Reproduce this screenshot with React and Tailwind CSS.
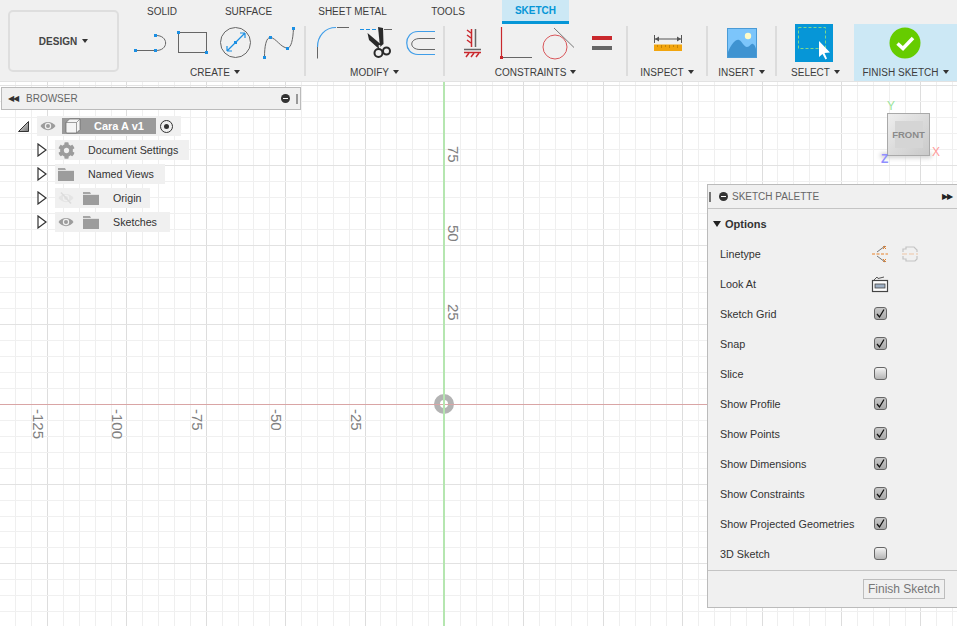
import { FaCog } from 'react-icons/fa'

const FONT = 'font-["Liberation_Sans",Arial,sans-serif]'

function Caret({ className = '' }) {
  return <span className={`inline-block w-0 h-0 border-x-[3.5px] border-x-transparent border-t-[4px] border-t-[#333] ${className}`} />
}

function Handle({ x, y, s = 3 }) {
  return <rect x={x - s / 2} y={y - s / 2} width={s} height={s} fill="#1b8fe3" shapeRendering="crispEdges" />
}

function CreateIcons() {
  return (
    <svg viewBox="126 24 178 38" className="w-[178px] h-[38px]" fill="none">
      <path d="M135 50.5H155M155.5 35.5C169 35 169 51 155.5 50.5" stroke="#666" strokeWidth="1" />
      <Handle x={135.5} y={50.5} /><Handle x={155.5} y={50.5} /><Handle x={155.5} y={35.5} />
      <rect x="178.5" y="32.5" width="28" height="20" stroke="#666" strokeWidth="1" />
      <Handle x={178.5} y={32.5} /><Handle x={206.5} y={52.5} />
      <circle cx="235.5" cy="42.5" r="15" stroke="#666" strokeWidth="1" />
      <path d="M227 51L245 33M245 33h-5M245 33v5M227 51h5M227 51v-5" stroke="#1b8fe3" strokeWidth="1.2" />
      <Handle x={235.5} y={42.5} />
      <path d="M264.5 57C264.5 47 266 37 270.5 37.5C276 38 281 48 287.5 48C291 48 293 40 293.5 28" stroke="#666" strokeWidth="1" />
      <Handle x={264.5} y={57.5} /><Handle x={270.5} y={37.5} /><Handle x={287.5} y={48.5} /><Handle x={293.5} y={28.5} />
    </svg>
  )
}

function ModifyIcons() {
  return (
    <svg viewBox="306 24 137 38" className="w-[137px] h-[38px]" fill="none">
      <path d="M317.5 47V58.5M337 27.5H349" stroke="#666" strokeWidth="1" />
      <path d="M317.5 47C317.5 36 325 27.5 336 27.5" stroke="#3f9de8" strokeWidth="1.2" />
      <path d="M360 29.5H377" stroke="#1b8fe3" strokeWidth="1" strokeDasharray="4 2" />
      <path d="M384 29.5H392" stroke="#666" strokeWidth="1" />
      <path d="M378 27L383 28L383.5 44L380 47Z" fill="#2a2a2a" />
      <path d="M367.5 33L380.5 44L378.5 48.5L369 40Z" fill="#2a2a2a" />
      <circle cx="379.5" cy="46" r="1" fill="#eee" />
      <circle cx="378.5" cy="53" r="4" stroke="#2a2a2a" strokeWidth="2" />
      <circle cx="386.5" cy="51" r="3.5" stroke="#2a2a2a" strokeWidth="2" />
      <path d="M435 31.5H418C403 31.5 403 54.5 418 54.5H435" stroke="#3f9de8" strokeWidth="1.2" />
      <path d="M435 38.5H420C409 38.5 409 49.5 420 49.5H435" stroke="#666" strokeWidth="1" />
    </svg>
  )
}

function ConstraintIcons() {
  return (
    <svg viewBox="445 24 181 38" className="w-[181px] h-[38px]" fill="none">
      <path d="M471.5 29V47" stroke="#c9282d" strokeWidth="1.5" />
      <path d="M475.5 29V47" stroke="#666" strokeWidth="1.5" />
      <path d="M467 30l4 3M467 35l4 3M467 40l4 3" stroke="#c9282d" strokeWidth="1.5" />
      <path d="M464 49.5H481" stroke="#666" strokeWidth="1.5" />
      <path d="M464 52.5H481" stroke="#c9282d" strokeWidth="1.5" />
      <path d="M466 57l3-4M471 57l3-4M476 57l3-4" stroke="#c9282d" strokeWidth="1.5" />
      <path d="M501.5 27V57" stroke="#c9282d" strokeWidth="1.2" />
      <path d="M503 57.5H532" stroke="#666" strokeWidth="1" />
      <rect x="500" y="56" width="3" height="3" fill="#c9282d" />
      <circle cx="555" cy="47" r="12" stroke="#d9565a" strokeWidth="1" />
      <path d="M554 28L574 47.5" stroke="#777" strokeWidth="1" />
      <rect x="592" y="36" width="20" height="4" fill="#c9282d" />
      <rect x="592" y="46" width="20" height="4" fill="#666" />
    </svg>
  )
}

function InspectIcon() {
  return (
    <svg viewBox="650 34 36 18" className="w-[36px] h-[18px] ml-[1px]" fill="none">
      <path d="M654.5 35V43M681.5 35V43M655 39H681" stroke="#555" strokeWidth="1" />
      <path d="M655 39l4-2.5v5ZM681 39l-4-2.5v5Z" fill="#555" />
      <rect x="654" y="44.5" width="28" height="6.5" fill="#f2a50e" />
      <path d="M657.5 45V47M661.5 45V48M665.5 45V47M669.5 45V48M673.5 45V47M677.5 45V48" stroke="#b97a05" strokeWidth="0.8" />
    </svg>
  )
}

function InsertIcon() {
  return (
    <svg viewBox="0 0 30 30" className="w-[30px] h-[30px]">
      <rect x="0.5" y="0.5" width="29" height="29" fill="#7cc5fb" stroke="#4a9bd6" />
      <circle cx="21" cy="8" r="3.2" fill="#fdfbc8" />
      <path d="M1 24C5 15 9 11 12 12C15 13 17 19 20 19C23 19 24 15 26 16C28 17 29 20 29 22V29H1Z" fill="#3f93d1" />
    </svg>
  )
}

function SelectIcon() {
  return (
    <svg viewBox="0 0 38 38" className="w-[38px] h-[38px] -ml-[3px]">
      <rect width="38" height="38" fill="#0696d7" />
      <rect x="3.5" y="3.5" width="27" height="21" fill="none" stroke="#7fd98a" strokeDasharray="3 2" />
      <path d="M24 17L24 33L27.5 30L30.5 35.5L32 34.5L29.5 29L35 28.5Z" fill="#fff" />
    </svg>
  )
}

function FinishIcon() {
  return (
    <svg viewBox="0 0 32 32" className="w-[32px] h-[32px] mb-[1px] mr-[2px]">
      <circle cx="16" cy="16" r="15.5" fill="#66cc00" />
      <path d="M8.5 16.5L14 21.5L24 11" fill="none" stroke="#fff" strokeWidth="3.5" />
    </svg>
  )
}

function Separator() {
  return <div className="w-[2px] h-[50px] mt-[2px] bg-[#dcdcdc] shrink-0" />
}

function Group({ label, width, children, active = false }) {
  return (
    <div className={`flex flex-col items-center shrink-0 ${active ? 'bg-[#cce8f5]' : ''}`} style={{ width }}>
      <div className="h-[38px] flex items-center justify-center">{children}</div>
      <div className="h-[18px] mt-[1px] flex items-center gap-[4px] text-[10px] text-[#3c3c3c] whitespace-nowrap">
        {label}
        <Caret />
      </div>
    </div>
  )
}

function Toolbar() {
  const tabs = [['SOLID', 'w-[58px]'], ['SURFACE', 'w-[115px]'], ['SHEET METAL', 'w-[93px]'], ['TOOLS', 'w-[98px]']]
  return (
    <div className="flex h-[82px] shrink-0 bg-[#f0f0f0] border-b border-[#e2e2e2]">
      <div className="w-[126px] shrink-0 pl-[8px] pt-[10px]">
        <div className="w-[111px] h-[62px] rounded-[5px] border-2 border-[#dedede] flex items-center justify-center gap-[5px] text-[10px] font-bold text-[#444]">
          DESIGN <Caret />
        </div>
      </div>
      <div className="flex-1 flex flex-col min-w-0">
        <div className="h-[24px] flex text-[10px] text-[#3c3c3c] pl-[7px]">
          {tabs.map(([t, w]) => (
            <div key={t} className={`${w} flex items-center justify-center h-[22px]`}>{t}</div>
          ))}
          <div className="w-[67px] h-[24px] ml-[5px] bg-[#cce8f5] border-b-[3px] border-[#0696d7] flex items-center justify-center font-bold text-[#0696d7]">SKETCH</div>
        </div>
        <div className="flex flex-1">
          <Group label="CREATE" width={178}><CreateIcons /></Group>
          <Separator />
          <Group label="MODIFY" width={137}><ModifyIcons /></Group>
          <Separator />
          <Group label="CONSTRAINTS" width={181}><ConstraintIcons /></Group>
          <Separator />
          <Group label="INSPECT" width={78}><InspectIcon /></Group>
          <Separator />
          <Group label="INSERT" width={67}><InsertIcon /></Group>
          <Separator />
          <Group label="SELECT" width={77}><SelectIcon /></Group>
          <Group label="FINISH SKETCH" width={103} active><FinishIcon /></Group>
        </div>
      </div>
    </div>
  )
}

// sketch grid, axes at the origin of the canvas
function SketchGrid() {
  const ox = 444
  const oy = 322
  const xs = []
  const ys = []
  for (let i = -28; i <= 33; i++) xs.push(i)
  for (let i = -14; i <= 20; i++) ys.push(i)
  return (
    <svg className="absolute inset-0 w-full h-full" shapeRendering="crispEdges">
      {xs.map((i) => {
        const x = Math.round(ox + i * 15.88) + 0.5
        return <line key={i} x1={x} x2={x} y1="0" y2="544" stroke={i % 5 === 0 ? '#dddddd' : '#efefef'} />
      })}
      {ys.map((i) => {
        const y = Math.round(oy - i * 15.93) + 0.5
        return <line key={i} x1="0" x2="957" y1={y} y2={y} stroke={i % 5 === 0 ? '#e2e2e2' : '#f0f0f0'} />
      })}
      <circle cx={ox} cy={oy} r="7" fill="none" stroke="#b3b3b3" strokeWidth="6" shapeRendering="auto" />
      <line x1="0" x2="957" y1={oy + 0.5} y2={oy + 0.5} stroke="#d9a5a5" />
      <line x1={ox} x2={ox} y1="0" y2="544" stroke="#b5e6b0" strokeWidth="2" />
    </svg>
  )
}

function RulerLabel({ text, className }) {
  return <span className={`absolute [writing-mode:vertical-rl] text-[15px] leading-none text-[#808080] ${className}`}>{text}</span>
}

function Eye({ off = false, className = '' }) {
  return (
    <svg viewBox="0 0 16 12" className={`w-[16px] h-[12px] ${className}`}>
      <path d="M0.5 6C4 0.5 12 0.5 15.5 6C12 11.5 4 11.5 0.5 6Z" fill={off ? '#e4e4e4' : '#9c9c9c'} />
      <circle cx="8" cy="6" r="3.2" fill="#f0f0f0" />
      <circle cx="8" cy="6" r="2" fill={off ? '#e4e4e4' : '#9c9c9c'} />
      {off && <path d="M3 0.5L13 11.5" stroke="#dcdcdc" strokeWidth="1.5" />}
    </svg>
  )
}

function Folder() {
  return (
    <svg viewBox="0 0 16 13" className="w-[16px] h-[13px]">
      <path d="M0 0H7L8 2H16V4H0Z" fill="#a6a6a6" />
      <rect y="3" width="16" height="10" fill="#9c9c9c" />
      <path d="M0 2.5H16" stroke="#f0f0f0" strokeWidth="0.8" />
    </svg>
  )
}

function Arrow() {
  return (
    <svg viewBox="0 0 10 14" className="w-[10px] h-[14px] shrink-0">
      <path d="M1 1L9 7L1 13Z" fill="#fff" stroke="#333" strokeWidth="1.2" />
    </svg>
  )
}

function Row({ width, children }) {
  return (
    <div className="flex items-center h-[24px] pl-[37px]">
      <Arrow />
      <div className="h-[20px] ml-[8px] bg-[#f0f0f0] flex items-center text-[10.7px] text-[#333] whitespace-nowrap" style={{ width }}>
        {children}
      </div>
    </div>
  )
}

function BrowserPanel() {
  return (
    <div className="absolute left-0 top-0 w-[301px]">
      <div className="ml-[1px] mt-[5px] h-[23px] bg-[#f0f0f0] border border-[#bbbbbb] flex items-center pl-[6px] pr-[2px] text-[10px] text-[#666]">
        <span className="text-[8px] text-[#333] w-[18px] tracking-[-1px]">◀◀</span>
        <span className="flex-1">BROWSER</span>
        <span className="w-[9px] h-[9px] rounded-full bg-[#333] flex items-center justify-center mr-[6px]">
          <span className="w-[5px] h-[1px] bg-white" />
        </span>
        <span className="w-[2px] h-[10px] border-x border-[#999]" />
      </div>
      <div className="mt-[4px] h-[24px] flex items-center pl-[18px]">
        <svg viewBox="0 0 11 11" className="w-[11px] h-[11px]">
          <defs>
            <linearGradient id="tri" x1="0" y1="0" x2="1" y2="1">
              <stop offset="0" stopColor="#eee" /><stop offset="1" stopColor="#777" />
            </linearGradient>
          </defs>
          <path d="M0.5 10.5L10.5 0.5V10.5Z" fill="url(#tri)" stroke="#333" />
        </svg>
        <div className="ml-[8px] w-[144px] h-[20px] bg-[#f0f0f0] flex items-center pl-[3px]">
          <Eye />
          <div className="ml-[6px] w-[94px] h-[16px] bg-[#9a9a9a] flex items-center text-[11px] font-bold text-white">
            <svg viewBox="0 0 16 16" className="w-[16px] h-[16px] ml-[3px]">
              <path d="M1 4.5L4.5 1H15V11.5L11.5 15H2A1 1 0 0 1 1 14Z" fill="#f4f4f4" stroke="#666" strokeWidth="0.7" />
              <path d="M1 4.5H11.5V15M11.5 4.5L15 1" fill="none" stroke="#777" strokeWidth="0.7" />
            </svg>
            <span className="ml-[13px]">Cara A v1</span>
          </div>
          <span className="ml-[4px] w-[13px] h-[13px] rounded-full border border-[#333] flex items-center justify-center">
            <span className="w-[5px] h-[5px] rounded-full bg-[#333]" />
          </span>
        </div>
      </div>
      <Row width={134}>
        <FaCog className="w-[17px] h-[17px] ml-[3px] text-[#9c9c9c]" />
        <span className="ml-[13px]">Document Settings</span>
      </Row>
      <Row width={110}>
        <span className="ml-[3px]"><Folder /></span>
        <span className="ml-[14px]">Named Views</span>
      </Row>
      <Row width={95}>
        <Eye off className="ml-[3px]" />
        <span className="ml-[9px]"><Folder /></span>
        <span className="ml-[14px]">Origin</span>
      </Row>
      <Row width={115}>
        <Eye className="ml-[3px]" />
        <span className="ml-[9px]"><Folder /></span>
        <span className="ml-[14px]">Sketches</span>
      </Row>
    </div>
  )
}

function ViewCube() {
  return (
    <div className="absolute left-[882px] top-[18px] w-[60px] h-[66px] text-[12px] leading-[14px]">
      <span className="absolute left-[5px] -top-[1px] text-[#9be59b]">Y</span>
      <div className="absolute left-[-2px] top-[53px] w-[52px] h-[5px] rounded-full bg-[#d0d0d0] blur-[2px]" />
      <div className="absolute left-[5px] top-[13px] w-[43px] h-[43px] border border-[#a9a9a9] bg-gradient-to-br from-[#eeeeee] to-[#c9c9c9] flex items-center justify-center">
        <div className="w-[28px] h-[27px] bg-[#d5d5d5] flex items-center justify-center font-bold text-[9.5px] text-[#8a8a8a]">FRONT</div>
      </div>
      <span className="absolute left-[50px] top-[45px] text-[#ff9a9a]">X</span>
      <span className="absolute -left-[1px] top-[52px] text-[#8f8fff] font-bold">Z</span>
    </div>
  )
}

function Checkbox({ checked }) {
  return (
    <span className={`-mt-[1px] w-[13px] h-[13px] rounded-[3px] border border-[#666] flex items-center justify-center bg-gradient-to-b ${checked ? 'from-[#c9c9c9] to-[#a8a8a8]' : 'from-[#f2f2f2] to-[#b5b5b5]'}`}>
      {checked && (
        <svg viewBox="0 0 11 11" className="w-[11px] h-[11px]">
          <path d="M2 6L4.5 9L9 1.5" fill="none" stroke="#111" strokeWidth="1.3" />
        </svg>
      )}
    </span>
  )
}

function LinetypeIcons() {
  return (
    <div className="flex gap-[12px] -ml-[3px]">
      <svg viewBox="0 0 18 18" className="w-[18px] h-[18px]" fill="none">
        <path d="M1 9H17" stroke="#e8822b" strokeWidth="1.2" strokeDasharray="3 1.5" />
        <path d="M14 1L6 7M14 17L6 11" stroke="#777" strokeWidth="1" />
        <path d="M12 1l3 3M15 1l-3 3M12 14l3 3M15 14l-3 3" stroke="#e8822b" strokeWidth="1" />
      </svg>
      <svg viewBox="0 0 18 18" className="w-[18px] h-[18px]" fill="none">
        <path d="M2 7V4H5V2H13L16 5V7M2 11V14H5V16H14L16 14V11" stroke="#c4c4c4" strokeWidth="1.2" />
        <path d="M1 9H17" stroke="#eec5a5" strokeWidth="1" strokeDasharray="5 2" />
      </svg>
    </div>
  )
}

function LookAtIcon() {
  return (
    <svg viewBox="0 0 18 18" className="w-[18px] h-[18px] -ml-[3px]" fill="none">
      <rect x="1.5" y="5.5" width="15" height="11" fill="#fff" stroke="#444" strokeWidth="1.2" />
      <rect x="4" y="9" width="10" height="4" fill="#9fb0c4" stroke="#444" strokeWidth="0.8" />
      <path d="M3 5L6 2L7 3.5L13 2" stroke="#555" strokeWidth="1" />
    </svg>
  )
}

function OptionRow({ label, children }) {
  return (
    <div className="h-[30px] flex items-center pl-[12px]">
      <span className="w-[154px] mt-[1px] text-[10.8px] text-[#333] whitespace-nowrap">{label}</span>
      {children}
    </div>
  )
}

function SketchPalette() {
  const checks = [
    ['Sketch Grid', true], ['Snap', true], ['Slice', false], ['Show Profile', true], ['Show Points', true],
    ['Show Dimensions', true], ['Show Constraints', true], ['Show Projected Geometries', true], ['3D Sketch', false],
  ]
  return (
    <div className="absolute left-[707px] top-[102px] w-[251px] h-[424px] bg-[#f0f0f0] border border-[#bbbbbb] flex flex-col">
      <div className="h-[24px] shrink-0 border-b border-[#c4c4c4] flex items-center pl-[1px] pr-[5px] text-[10px] text-[#666]">
        <span className="w-[2px] h-[10px] border-x border-[#777]" />
        <span className="ml-[8px] w-[9px] h-[9px] rounded-full bg-[#333] flex items-center justify-center">
          <span className="w-[5px] h-[1px] bg-white" />
        </span>
        <span className="ml-[4px] flex-1">SKETCH PALETTE</span>
        <span className="text-[8px] text-[#222] tracking-[-1px]">▶▶</span>
      </div>
      <div className="h-[30px] shrink-0 flex items-center pl-[5px] text-[11px] font-bold text-[#333]">
        <span className="w-0 h-0 border-x-[4px] border-x-transparent border-t-[6px] border-t-[#222] mr-[4px]" />
        Options
      </div>
      <div className="flex-1">
        <OptionRow label="Linetype"><LinetypeIcons /></OptionRow>
        <OptionRow label="Look At"><LookAtIcon /></OptionRow>
        {checks.map(([label, on]) => (
          <OptionRow key={label} label={label}><Checkbox checked={on} /></OptionRow>
        ))}
      </div>
      <div className="h-[37px] shrink-0 border-t border-[#c4c4c4] flex items-center justify-end pr-[12px]">
        <div className="w-[82px] h-[20px] bg-[#f0f0f0] border border-[#bdbdbd] flex items-center justify-center text-[12px] text-[#777] whitespace-nowrap">Finish Sketch</div>
      </div>
    </div>
  )
}

export default function App() {
  return (
    <div className={`w-[957px] h-[626px] overflow-hidden flex flex-col bg-white ${FONT}`}>
      <Toolbar />
      <div className="relative flex-1">
        <SketchGrid />
        <RulerLabel text="75" className="left-[446px] top-[64px]" />
        <RulerLabel text="50" className="left-[446px] top-[143px]" />
        <RulerLabel text="25" className="left-[446px] top-[222px]" />
        <RulerLabel text="-25" className="left-[349px] top-[327px]" />
        <RulerLabel text="-50" className="left-[269px] top-[327px]" />
        <RulerLabel text="-75" className="left-[190px] top-[327px]" />
        <RulerLabel text="-100" className="left-[110px] top-[327px]" />
        <RulerLabel text="-125" className="left-[31px] top-[327px]" />
        <BrowserPanel />
        <ViewCube />
        <SketchPalette />
      </div>
    </div>
  )
}
